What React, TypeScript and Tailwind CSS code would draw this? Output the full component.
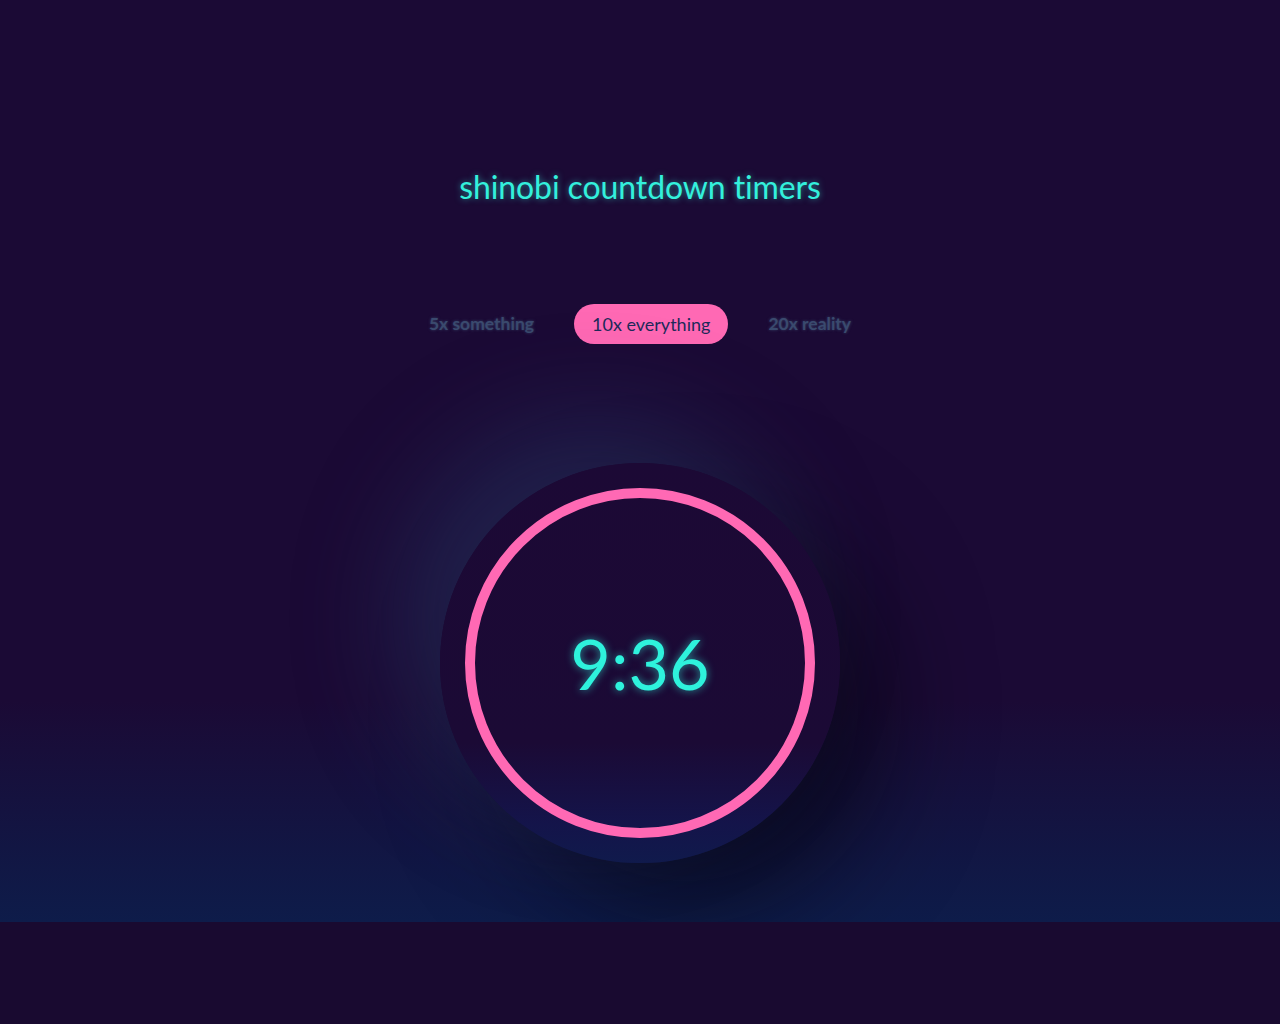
import React from "react";

export default function App() {
  return (
    <div className="min-h-[1024px] w-full bg-[#190a30]" style={{ fontFamily: "Lato, 'Open Sans', sans-serif" }}>
      <div className="relative h-[922px] w-full overflow-hidden bg-[linear-gradient(to_bottom,#1b0a35_0%,#1b0a35_76%,#141340_88%,#0e1c4a_100%)] flex flex-col items-center">
        <h1 className="mt-[167px] text-[32px] leading-[40px] tracking-[-0.1px] text-[#33f0dc] [text-shadow:0_0_6px_rgba(51,240,220,0.55)]">
          shinobi countdown timers
        </h1>
        <div className="mt-[97px] flex items-center gap-[40px] text-[18px]">
          <button className="h-[40px] leading-[40px] text-[17.5px] text-[#3a4a6e] font-bold [text-shadow:0_0_3px_rgba(58,74,110,0.9)]">5x something</button>
          <button className="h-[40px] px-[18px] rounded-full bg-[#ff69b4] text-[#1e2a5a]">10x everything</button>
          <button className="h-[40px] leading-[40px] text-[17.5px] text-[#3a4a6e] font-bold [text-shadow:0_0_3px_rgba(58,74,110,0.9)]">20x reality</button>
        </div>
        <div className="mt-[119px] w-[400px] h-[400px] rounded-full bg-[linear-gradient(to_bottom,#1c0935_0%,#1b0a35_70%,#14144a_90%,#101a4c_100%)] shadow-[-45px_-45px_100px_rgba(40,60,105,0.45),45px_45px_100px_rgba(5,5,15,0.6)] flex items-center justify-center">
          <div className="w-[350px] h-[350px] rounded-full border-[10px] border-[#ff69b4] flex items-center justify-center">
            <span className="text-[70px] font-normal leading-none text-[#2ef2dc] [text-shadow:0_0_8px_rgba(46,242,220,0.6)]">
              9:36
            </span>
          </div>
        </div>
      </div>
    </div>
  );
}
